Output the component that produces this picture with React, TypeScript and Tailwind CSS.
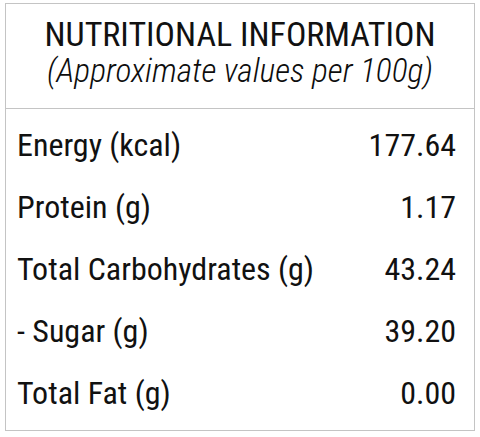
const rows = [
  { label: "Energy (kcal)", value: "177.64" },
  { label: "Protein (g)", value: "1.17" },
  { label: "Total Carbohydrates (g)", value: "43.24" },
  { label: "- Sugar (g)", value: "39.20" },
  { label: "Total Fat (g)", value: "0.00" },
];

export default function App() {
  return (
    <div className="w-[480px] h-[437px] bg-white pl-[5px] pt-[3px] font-['Roboto_Condensed','Liberation_Sans',sans-serif] text-[#111]">
      <div className="w-[470px] h-[428px] border border-[#c4c4c4]">
        {/* Header */}
        <div className="pt-[12px] pb-[19px] border-b border-[#c4c4c4] text-center">
          <h1 className="text-[34px] leading-[37px]">NUTRITIONAL INFORMATION</h1>
          <p className="italic font-light text-[33.5px] leading-[36px] text-[#0d0d0d]">(Approximate values per 100g)</p>
        </div>
        {/* Rows */}
        <div className="pt-[5px] pl-[11px] pr-[18px]">
          {rows.map((r) => (
            <div key={r.label} className="flex justify-between text-[32px] leading-[62px]">
              <span>{r.label}</span>
              <span>{r.value}</span>
            </div>
          ))}
        </div>
      </div>
    </div>
  );
}
